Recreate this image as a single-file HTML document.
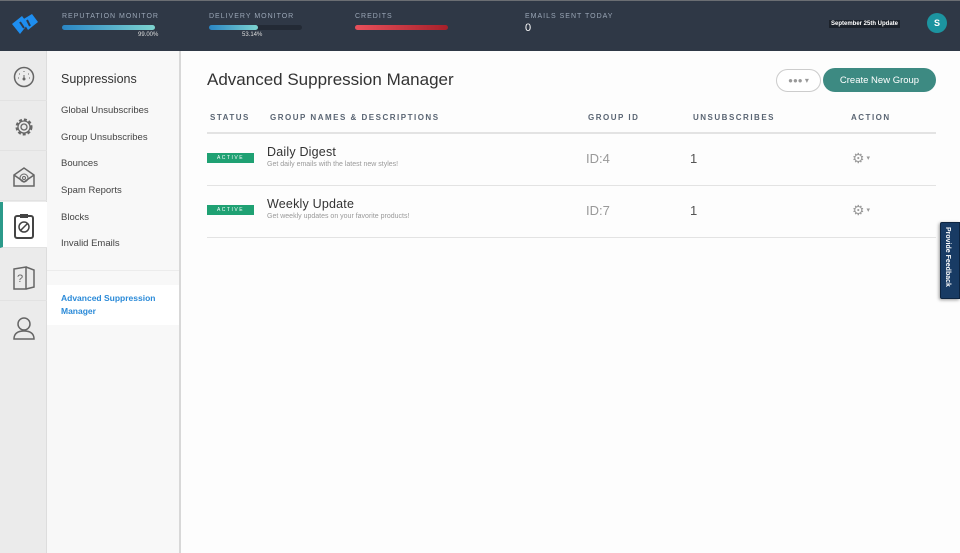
<!DOCTYPE html>
<html><head><style>
*{box-sizing:border-box;margin:0;padding:0}
body{width:960px;height:553px;overflow:hidden;font-family:"Liberation Sans",sans-serif;background:#fdfdfd;position:relative}
.top{position:absolute;left:0;top:0;width:960px;height:51px;background:#2f3846;border-top:1px solid #6b6e73}
.lbl{position:absolute;font-size:7px;letter-spacing:1px;color:#9aa6b6;top:12px}
.bar{position:absolute;height:5px;border-radius:3px;top:24px}
.rail{position:absolute;left:0;top:51px;width:47px;height:502px;background:#ebebeb;border-right:1px solid #ddd}
.ri{position:absolute;left:0;width:47px;height:50px;border-bottom:1px solid #e2e2e2}
.sub{position:absolute;left:47px;top:51px;width:134px;height:502px;background:#f8f8f8;border-right:2px solid #d8d8d8}
.sub a{position:absolute;left:14px;font-size:9.5px;color:#444}
.th{position:absolute;top:113px;font-size:8px;font-weight:bold;letter-spacing:1.5px;color:#5a6573}
.badge{position:absolute;left:207px;width:47px;height:10px;background:#1fa173;color:#fff;font-size:5px;letter-spacing:1.5px;text-align:center;line-height:10px}
.nm{position:absolute;left:267px;font-size:12.5px;color:#333;letter-spacing:.2px}
.ds{position:absolute;left:267px;font-size:7px;color:#999}
.id{position:absolute;left:586px;font-size:13px;color:#999}
.un{position:absolute;left:690px;font-size:13px;color:#555}
.hr{position:absolute;left:207px;width:729px;height:1px;background:#e3e3e3}
.gear{position:absolute;left:852px;font-size:14px;color:#999;line-height:14px}
</style></head><body>
<div class="top">
<svg style="position:absolute;left:10px;top:11px" width="30" height="26" viewBox="0 0 30 26"><g fill="#1e8ef0"><path d="M2 12 L12 4 L18 12 L10 22Z"/><path d="M12 8 L22 2 L28 10 L18 18Z"/></g><path d="M10 10 L14 16 M17 8 L20 14" stroke="#2f3846" stroke-width="2"/></svg>
<div class="lbl" style="left:62px">REPUTATION MONITOR</div>
<div class="bar" style="left:62px;width:93px;background:linear-gradient(90deg,#2a86c5,#7dd3cf)"></div>
<div style="position:absolute;left:138px;top:31px;font-size:6px;color:#ddd">99.00%</div>
<div class="lbl" style="left:209px">DELIVERY MONITOR</div>
<div class="bar" style="left:209px;width:93px;background:#232a35"></div>
<div class="bar" style="left:209px;width:49px;background:linear-gradient(90deg,#2a86c5,#7dd3cf)"></div>
<div style="position:absolute;left:242px;top:31px;font-size:6px;color:#ddd">53.14%</div>
<div class="lbl" style="left:355px">CREDITS</div>
<div class="bar" style="left:355px;width:93px;background:linear-gradient(90deg,#e8505b,#a6202a)"></div>
<div class="lbl" style="left:525px">EMAILS SENT TODAY</div>
<div style="position:absolute;left:525px;top:21px;font-size:11px;color:#fff">0</div>
<div style="position:absolute;left:829px;top:19px;font-size:6px;color:#fff;background:#1c222b;padding:1px 2px;font-weight:bold">September 25th Update</div>
<div style="position:absolute;left:927px;top:12px;width:20px;height:20px;border-radius:50%;background:#1c94a0;color:#fff;font-size:9px;font-weight:bold;text-align:center;line-height:20px">S</div>
</div>
<div class="rail">
<div class="ri" style="top:0"><svg style="position:absolute;left:13px;top:15px" width="22" height="22"><circle cx="11" cy="11" r="9.5" fill="none" stroke="#666" stroke-width="1.5"/><circle cx="11" cy="13" r="1.5" fill="#666"/><path d="M11 13 L11 9 M6 8h1 M15 8h1 M11 5v1 M5 12h1 M16 12h1" stroke="#666"/></svg></div>
<div class="ri" style="top:50px"><svg style="position:absolute;left:13px;top:15px" width="22" height="22"><circle cx="11" cy="11" r="7.5" fill="none" stroke="#666" stroke-width="2" stroke-dasharray="3 2"/><circle cx="11" cy="11" r="6" fill="none" stroke="#666" stroke-width="1.3"/><circle cx="11" cy="11" r="3" fill="none" stroke="#666" stroke-width="1.3"/></svg></div>
<div class="ri" style="top:100px"><svg style="position:absolute;left:12px;top:15px" width="24" height="22"><path d="M2 9 L12 2 L22 9 V20 H2Z M2 9 L12 16 L22 9" fill="none" stroke="#666" stroke-width="1.5"/><circle cx="12" cy="12" r="4" fill="none" stroke="#666"/><circle cx="12" cy="12" r="1.5" fill="none" stroke="#666"/></svg></div>
<div class="ri" style="top:151px;height:46px;background:#fff;border-left:3px solid #2b9a8a"><svg style="position:absolute;left:10px;top:10px" width="22" height="28"><rect x="2" y="4" width="18" height="22" rx="2" fill="none" stroke="#444" stroke-width="2"/><rect x="7" y="2" width="8" height="4" fill="#444"/><circle cx="11" cy="15" r="5" fill="none" stroke="#444" stroke-width="1.5"/><path d="M7.5 18.5 L14.5 11.5" stroke="#444" stroke-width="1.5"/></svg></div>
<div class="ri" style="top:200px"><svg style="position:absolute;left:12px;top:14px" width="24" height="26"><path d="M2 4 L14 2 V24 L2 24Z M14 2 L22 5 V22 L14 24" fill="none" stroke="#666" stroke-width="1.5"/><text x="5" y="17" font-size="11" fill="#666" font-family="Liberation Sans">?</text></svg></div>
<div class="ri" style="top:250px;border:none"><svg style="position:absolute;left:12px;top:14px" width="24" height="26"><circle cx="12" cy="9" r="6" fill="none" stroke="#666" stroke-width="1.5"/><path d="M2 24 Q2 16 12 16 Q22 16 22 24Z" fill="none" stroke="#666" stroke-width="1.5"/></svg></div>
</div>
<div class="sub">
<div style="position:absolute;left:14px;top:21px;font-size:12.5px;color:#333">Suppressions</div>
<a style="top:54px">Global Unsubscribes</a>
<a style="top:81px">Group Unsubscribes</a>
<a style="top:107px">Bounces</a>
<a style="top:134px">Spam Reports</a>
<a style="top:161px">Blocks</a>
<a style="top:187px">Invalid Emails</a>
<div style="position:absolute;left:0;top:219px;width:132px;height:1px;background:#ececec"></div>
<div style="position:absolute;left:0;top:234px;width:132px;height:40px;background:#fff"></div>
<a style="top:241px;color:#2a8ad8;font-weight:bold;line-height:13px;font-size:8.5px">Advanced Suppression<br>Manager</a>
</div>
<div style="position:absolute;left:207px;top:70px;font-size:17px;color:#333">Advanced Suppression Manager</div>
<div style="position:absolute;left:776px;top:69px;width:45px;height:23px;border:1.5px solid #ccc;border-radius:12px;background:#fff;font-size:8px;color:#999;text-align:center;line-height:21px">●●● ▾</div>
<div style="position:absolute;left:823px;top:68px;width:113px;height:24px;border-radius:12px;background:#3d8a82;color:#fff;font-size:9.5px;text-align:center;line-height:25px">Create New Group</div>
<div class="th" style="left:210px">STATUS</div>
<div class="th" style="left:270px">GROUP NAMES &amp; DESCRIPTIONS</div>
<div class="th" style="left:588px">GROUP ID</div>
<div class="th" style="left:693px">UNSUBSCRIBES</div>
<div class="th" style="left:851px">ACTION</div>
<div class="hr" style="top:132px;height:2px"></div>
<div class="badge" style="top:153px">ACTIVE</div>
<div class="nm" style="top:145px">Daily Digest</div>
<div class="ds" style="top:161px">Get daily emails with the latest new styles!</div>
<div class="id" style="top:151px">ID:4</div>
<div class="un" style="top:151px">1</div>
<div class="gear" style="top:151px">⚙<span style="font-size:7px;vertical-align:3px"> ▾</span></div>
<div class="hr" style="top:185px"></div>
<div class="badge" style="top:205px">ACTIVE</div>
<div class="nm" style="top:197px">Weekly Update</div>
<div class="ds" style="top:213px">Get weekly updates on your favorite products!</div>
<div class="id" style="top:203px">ID:7</div>
<div class="un" style="top:203px">1</div>
<div class="gear" style="top:203px">⚙<span style="font-size:7px;vertical-align:3px"> ▾</span></div>
<div class="hr" style="top:237px"></div>
<div style="position:absolute;left:940px;top:222px;width:20px;height:77px;background:#183b64;border:1px solid #0d2440;box-shadow:-1px 1px 3px rgba(0,0,0,.4);border-radius:2px 0 0 2px"><div style="position:absolute;left:3px;top:4px;writing-mode:vertical-rl;font-size:7px;font-weight:bold;color:#fff">Provide Feedback</div></div>
</body></html>
